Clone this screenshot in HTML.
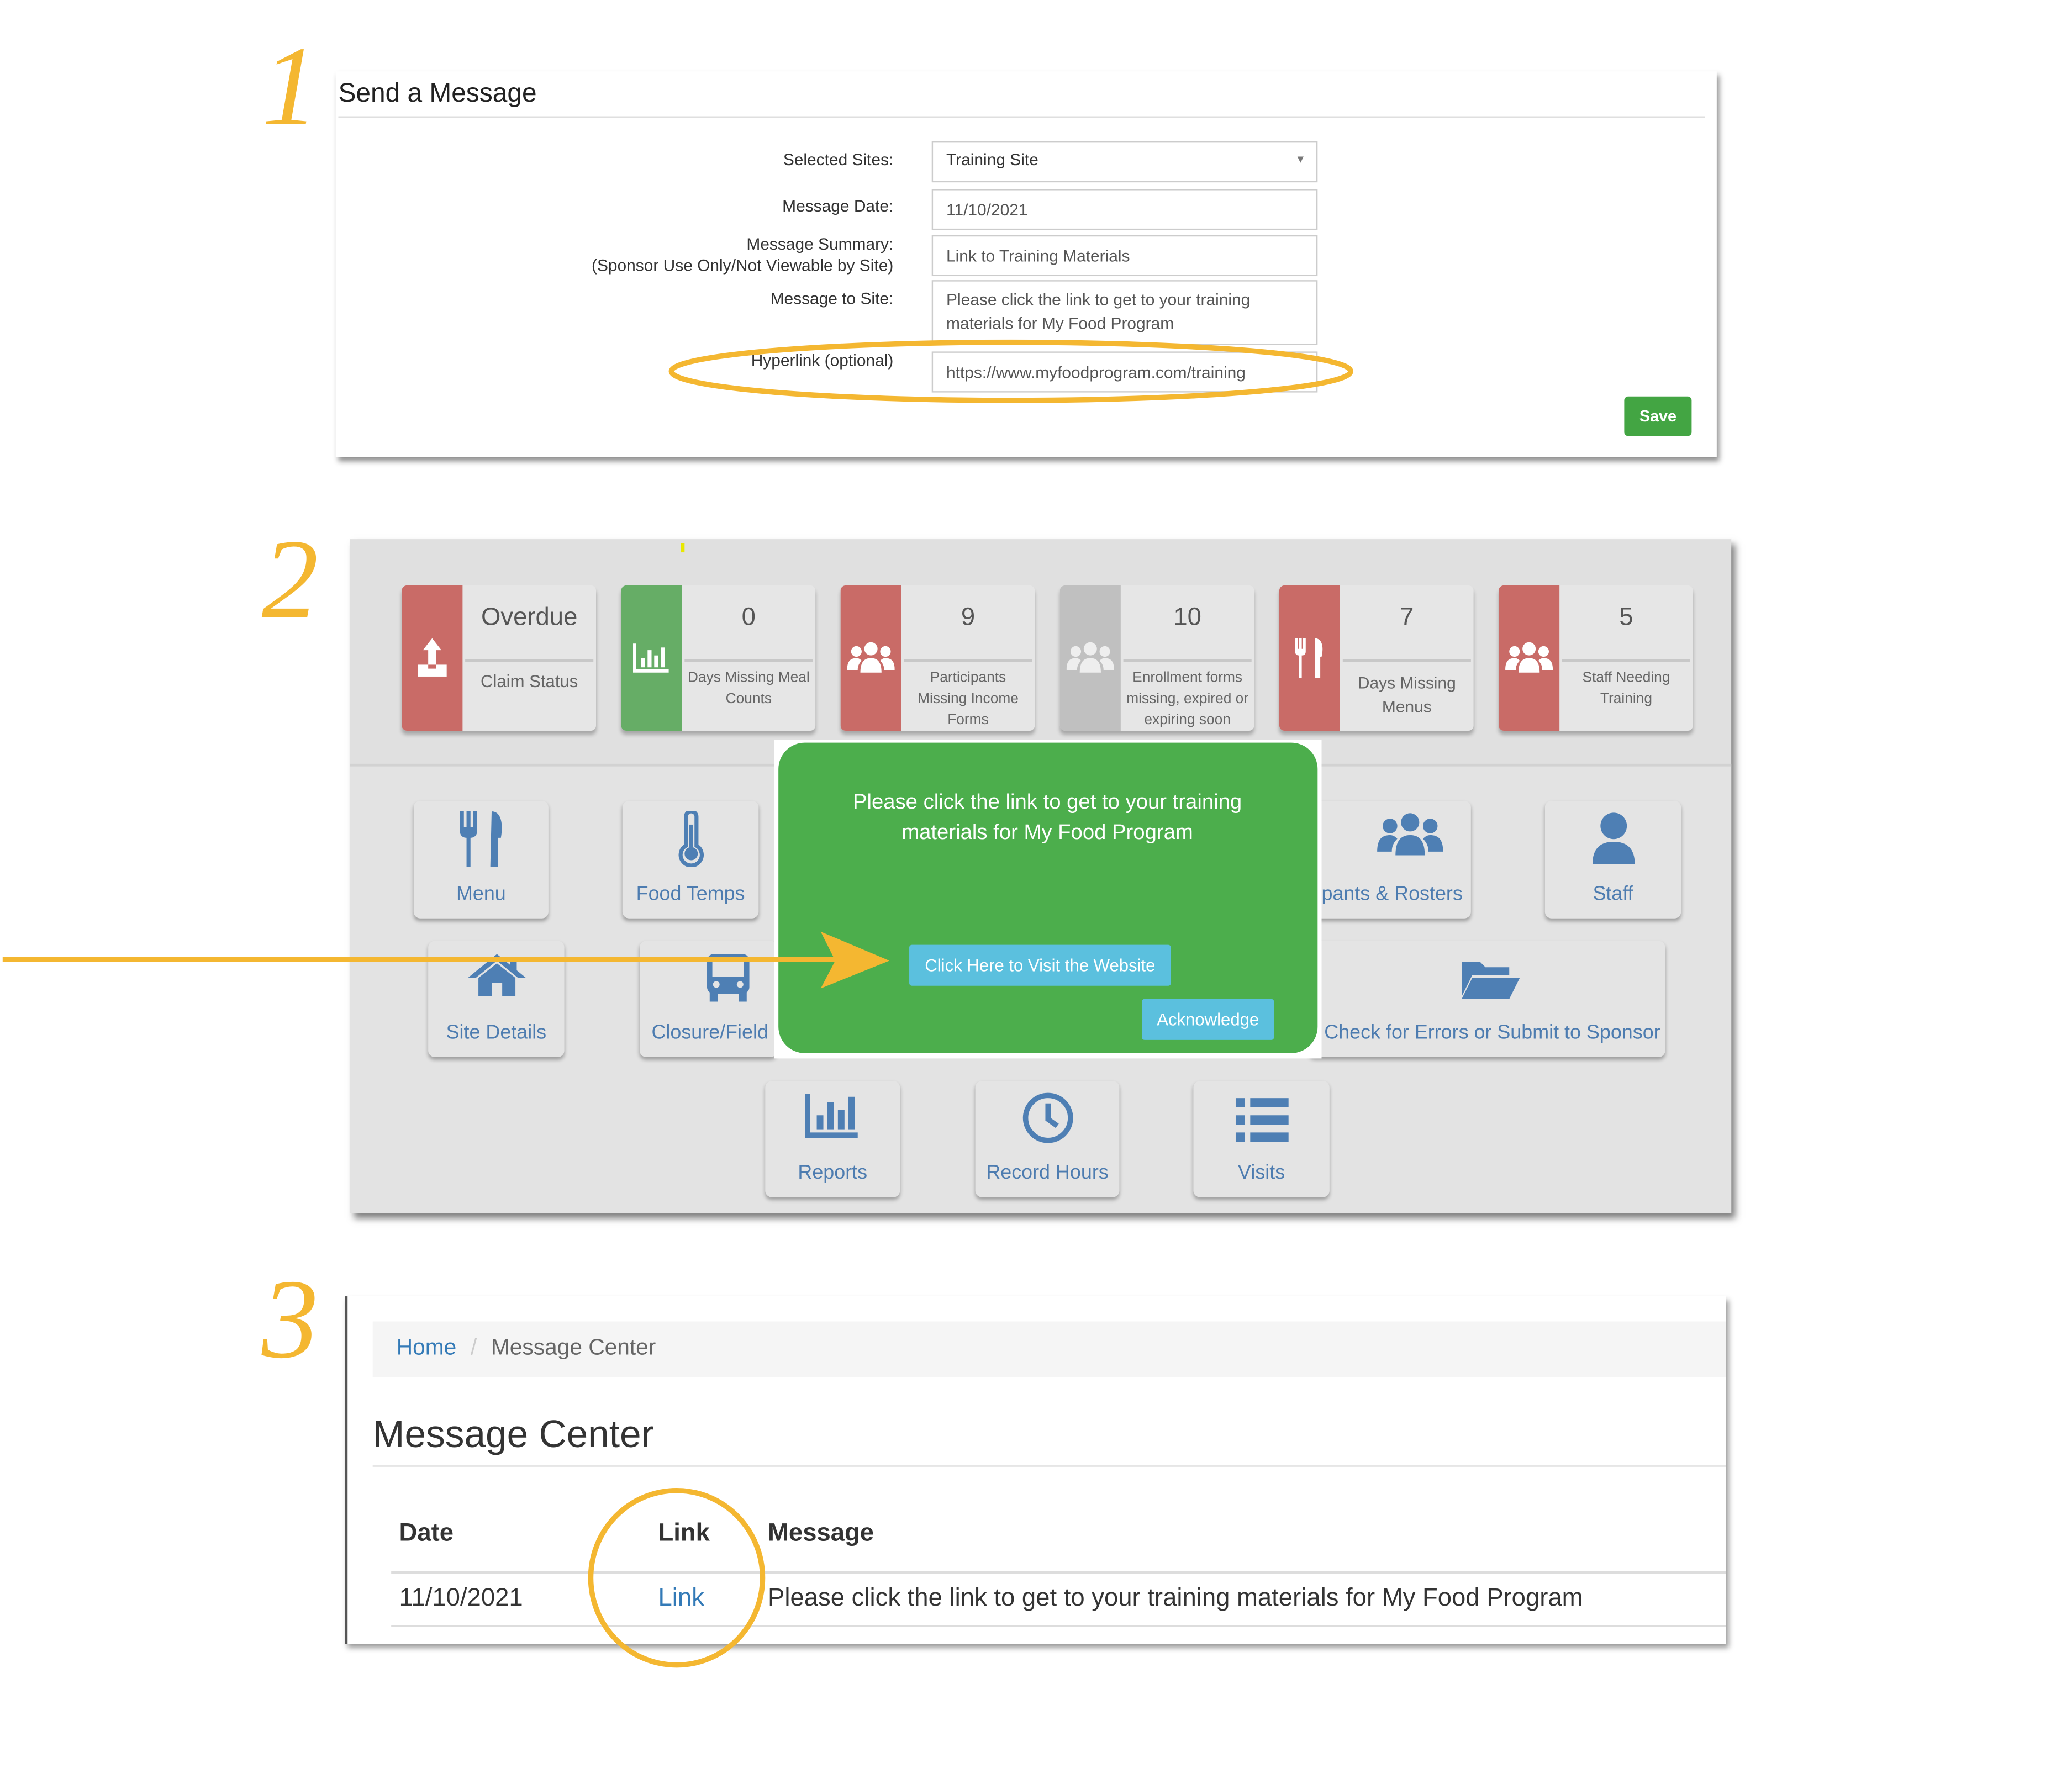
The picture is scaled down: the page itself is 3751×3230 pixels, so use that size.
<!DOCTYPE html>
<html><head><meta charset="utf-8">
<style>
*{box-sizing:border-box;margin:0;padding:0}
html,body{width:3751px;height:3230px;overflow:hidden;background:#fff}
#w{position:absolute;left:0;top:0;width:1568px;height:1350px;transform:scale(2.3925);transform-origin:0 0;font-family:"Liberation Sans",sans-serif;}
.a{position:absolute}
.num{position:absolute;font-family:"Liberation Serif",serif;font-style:italic;color:#f4b731;font-size:86px;line-height:1}
.lbl{position:absolute;right:892px;text-align:right;font-size:12.5px;color:#333;width:300px}
.inp{position:absolute;left:705px;width:292px;border:1px solid #ccc;background:#fff;font-size:12.5px;color:#555;padding:6px 10px;line-height:18px}
.card{position:absolute;top:443px;width:147px;height:110px;background:#e6e6e6;border-radius:4px;box-shadow:0 3px 3px rgba(0,0,0,.25);overflow:hidden}
.card .s{position:absolute;left:0;top:0;width:46px;height:110px}
.card .t{position:absolute;left:46px;right:0;top:14px;text-align:center;font-size:19px;color:#555}
.card .h{position:absolute;left:48px;right:2px;top:56px;border-top:2px solid #c8c8c8}
.card .b{position:absolute;left:46px;right:0;top:62px;text-align:center;font-size:11px;color:#666;line-height:16px}
.red{background:#c96b67}.grn{background:#66ad66}.gry{background:#c0c0c0}
.tile{position:absolute;background:#e4e4e4;border-radius:5px;box-shadow:0 2px 3px rgba(0,0,0,.3);text-align:center;color:#4d7cb0;font-size:15px}
.tile .l{position:absolute;left:0;right:0;bottom:10px;white-space:nowrap}
.tile svg{position:absolute;left:50%;transform:translateX(-50%);top:8px}
</style></head><body><div id="w">

<div class="num" style="left:198px;top:22px">1</div>
<div class="num" style="left:198px;top:395px">2</div>
<div class="num" style="left:198px;top:955px">3</div>

<div class="a" style="left:254px;top:54px;width:1045px;height:292px;background:#fff;box-shadow:2px 3px 4px rgba(0,0,0,.45)"></div>
<div class="a" style="left:256px;top:60px;font-size:20px;color:#222">Send a Message</div>
<div class="a" style="left:256px;top:88px;width:1034px;border-top:1px solid #ddd"></div>
<div class="lbl" style="top:114px">Selected Sites:</div>
<div class="lbl" style="top:149px">Message Date:</div>
<div class="lbl" style="top:177px;line-height:16px">Message Summary:<br>(Sponsor Use Only/Not Viewable by Site)</div>
<div class="lbl" style="top:219px">Message to Site:</div>
<div class="lbl" style="top:266px">Hyperlink (optional)</div>
<div class="inp" style="top:107px;height:31px;color:#333;padding-top:4px">Training Site<span style="position:absolute;right:8px;top:4px;font-size:8px;color:#777">▼</span></div>
<div class="inp" style="top:143px;height:31px">11/10/2021</div>
<div class="inp" style="top:178px;height:31px">Link to Training Materials</div>
<div class="inp" style="top:212px;height:49px;padding-top:5px">Please click the link to get to your training materials for My Food Program</div>
<div class="inp" style="top:266px;height:31px">https://www.myfoodprogram.com/training</div>
<div class="a" style="left:1229px;top:300px;width:51px;height:30px;background:#43a543;border-radius:3px;color:#fff;font-size:12px;font-weight:bold;text-align:center;line-height:30px">Save</div>
<svg class="a" style="left:0;top:0" width="1560" height="1344"><ellipse cx="765" cy="281" rx="257" ry="22" fill="none" stroke="#f4b731" stroke-width="4"/></svg>

<div class="a" style="left:265px;top:408px;width:1045px;height:510px;background:#e0e0e0;box-shadow:3px 4px 5px rgba(0,0,0,.5)"></div>
<div class="a" style="left:265px;top:578px;width:1045px;height:340px;background:#e3e3e3;border-top:2px solid #d2d2d2"></div>
<div class="a" style="left:515px;top:411px;width:3px;height:7px;background:#e8e800"></div>

<div class="card" style="left:304px"><div class="s red"></div><div class="t">Overdue</div><div class="h"></div><div class="b" style="top:65px;font-size:13px">Claim Status</div>
<svg class="a" style="left:10px;top:40px" width="26" height="30" viewBox="0 0 26 30"><path d="M13 0 L6 9 H10 V22 H16 V9 H20Z" fill="#fff"/><rect x="2" y="20" width="22" height="9" fill="#fff"/><rect x="10" y="20" width="6" height="3" fill="#c96b67"/></svg></div>
<div class="card" style="left:470px"><div class="s grn"></div><div class="t">0</div><div class="h"></div><div class="b">Days Missing Meal<br>Counts</div>
<svg class="a" style="left:9px;top:44px" width="28" height="22" viewBox="0 0 28 22"><path d="M1 0V21H27" stroke="#fff" stroke-width="3" fill="none"/><rect x="6" y="11" width="3" height="7" fill="#fff"/><rect x="11" y="5" width="3" height="13" fill="#fff"/><rect x="16" y="9" width="3" height="9" fill="#fff"/><rect x="21" y="3" width="3" height="15" fill="#fff"/></svg></div>
<div class="card" style="left:636px"><div class="s red"></div><div class="t">9</div><div class="h"></div><div class="b">Participants<br>Missing Income<br>Forms</div>
<svg class="a" style="left:5px;top:42px" width="36" height="26" viewBox="0 0 36 26"><g fill="#fff"><circle cx="18" cy="6" r="5"/><circle cx="7" cy="8" r="4"/><circle cx="29" cy="8" r="4"/><path d="M10 24c0-8 3-11 8-11s8 3 8 11z"/><path d="M0 22c0-6 2-9 7-9 2 0 3 1 4 2-2 2-3 4-3 7z"/><path d="M36 22c0-6-2-9-7-9-2 0-3 1-4 2 2 2 3 4 3 7z"/></g></svg></div>
<div class="card" style="left:802px"><div class="s gry"></div><div class="t">10</div><div class="h"></div><div class="b">Enrollment forms<br>missing, expired or<br>expiring soon</div>
<svg class="a" style="left:5px;top:42px" width="36" height="26" viewBox="0 0 36 26"><g fill="#eee"><circle cx="18" cy="6" r="5"/><circle cx="7" cy="8" r="4"/><circle cx="29" cy="8" r="4"/><path d="M10 24c0-8 3-11 8-11s8 3 8 11z"/><path d="M0 22c0-6 2-9 7-9 2 0 3 1 4 2-2 2-3 4-3 7z"/><path d="M36 22c0-6-2-9-7-9-2 0-3 1-4 2 2 2 3 4 3 7z"/></g></svg></div>
<div class="card" style="left:968px"><div class="s red"></div><div class="t">7</div><div class="h"></div><div class="b" style="top:65px;font-size:12.5px;line-height:18px">Days Missing<br>Menus</div>
<svg class="a" style="left:11px;top:40px" width="24" height="30" viewBox="0 0 24 30"><g fill="#fff"><path d="M1 0h2v8h1V0h2v8h1V0h2v10c0 2-1 3-3 3v17H4V13C2 13 1 12 1 10z"/><path d="M16 0c5 0 7 6 5 14h-1v16h-4z"/></g></svg></div>
<div class="card" style="left:1134px"><div class="s red"></div><div class="t">5</div><div class="h"></div><div class="b">Staff Needing<br>Training</div>
<svg class="a" style="left:5px;top:42px" width="36" height="26" viewBox="0 0 36 26"><g fill="#fff"><circle cx="18" cy="6" r="5"/><circle cx="7" cy="8" r="4"/><circle cx="29" cy="8" r="4"/><path d="M10 24c0-8 3-11 8-11s8 3 8 11z"/><path d="M0 22c0-6 2-9 7-9 2 0 3 1 4 2-2 2-3 4-3 7z"/><path d="M36 22c0-6-2-9-7-9-2 0-3 1-4 2 2 2 3 4 3 7z"/></g></svg></div>

<div class="tile" style="left:313px;top:606px;width:102px;height:89px"><svg width="36" height="42" viewBox="0 0 36 42"><g fill="#4e7fb4"><path d="M2 0h3v12h2V0h3v12h2V0h3v15c0 3-2 5-5 5v22H7V20c-3 0-5-2-5-5z"/><path d="M26 0c7 0 9 9 7 20h-2v22h-6z"/></g></svg><div class="l">Menu</div></div>
<div class="tile" style="left:471px;top:606px;width:103px;height:89px"><svg width="24" height="42" viewBox="0 0 24 42"><path d="M8 4a4 4 0 0 1 8 0v22a8 8 0 1 1-8 0z" fill="none" stroke="#4e7fb4" stroke-width="3"/><circle cx="12" cy="32" r="5" fill="#4e7fb4"/><rect x="10.5" y="10" width="3" height="20" fill="#4e7fb4"/></svg><div class="l">Food Temps</div></div>
<div class="tile" style="left:990px;top:606px;width:123px;height:89px"><svg width="52" height="36" viewBox="0 0 36 26" style="left:63%"><g fill="#4e7fb4"><circle cx="18" cy="6" r="5"/><circle cx="7" cy="8" r="4"/><circle cx="29" cy="8" r="4"/><path d="M10 24c0-8 3-11 8-11s8 3 8 11z"/><path d="M0 22c0-6 2-9 7-9 2 0 3 1 4 2-2 2-3 4-3 7z"/><path d="M36 22c0-6-2-9-7-9-2 0-3 1-4 2 2 2 3 4 3 7z"/></g></svg><div class="l" style="left:10px;text-align:left">pants &amp; Rosters</div></div>
<div class="tile" style="left:1169px;top:606px;width:103px;height:89px"><svg width="36" height="42" viewBox="0 0 36 42"><circle cx="18" cy="11" r="10" fill="#4e7fb4"/><path d="M2 40c0-12 6-17 16-17s16 5 16 17z" fill="#4e7fb4"/></svg><div class="l">Staff</div></div>

<div class="tile" style="left:324px;top:712px;width:103px;height:88px"><svg width="48" height="36" viewBox="0 0 48 36"><path d="M24 2 L2 20 H8 L24 7 L40 20 H46Z" fill="#4e7fb4"/><path d="M10 20 L24 9 L38 20 V34 H28 V24 H20 V34 H10Z" fill="#4e7fb4"/><rect x="34" y="4" width="5" height="10" fill="#4e7fb4"/></svg><div class="l">Site Details</div></div>
<div class="tile" style="left:484px;top:712px;width:104px;height:88px"><svg width="40" height="40" viewBox="0 0 40 40" style="left:64%"><rect x="4" y="2" width="32" height="30" rx="5" fill="#4e7fb4"/><rect x="8" y="8" width="24" height="11" fill="#e4e4e4"/><circle cx="11" cy="25" r="2.5" fill="#e4e4e4"/><circle cx="29" cy="25" r="2.5" fill="#e4e4e4"/><rect x="6" y="31" width="6" height="7" fill="#4e7fb4"/><rect x="28" y="31" width="6" height="7" fill="#4e7fb4"/></svg><div class="l" style="left:9px;text-align:left">Closure/Field</div></div>
<div class="tile" style="left:990px;top:712px;width:270px;height:88px"><svg width="48" height="34" viewBox="0 0 48 34" style="left:51%;top:12px"><path d="M2 4h14l4 4h18v6H10L2 30z" fill="#4e7fb4"/><path d="M10 16h36L38 32H2z" fill="#4e7fb4"/></svg><div class="l" style="left:12px;text-align:left">Check for Errors or Submit to Sponsor</div></div>

<div class="tile" style="left:579px;top:818px;width:102px;height:88px"><svg width="42" height="36" viewBox="0 0 42 36"><path d="M2 2V33H40" stroke="#4e7fb4" stroke-width="4" fill="none"/><rect x="9" y="18" width="5" height="11" fill="#4e7fb4"/><rect x="17" y="8" width="5" height="21" fill="#4e7fb4"/><rect x="25" y="14" width="5" height="15" fill="#4e7fb4"/><rect x="33" y="4" width="5" height="25" fill="#4e7fb4"/></svg><div class="l">Reports</div></div>
<div class="tile" style="left:738px;top:818px;width:109px;height:88px"><svg width="40" height="40" viewBox="0 0 40 40"><circle cx="20" cy="20" r="17" fill="none" stroke="#4e7fb4" stroke-width="4"/><path d="M20 9V21L27 26" stroke="#4e7fb4" stroke-width="4" fill="none"/></svg><div class="l">Record Hours</div></div>
<div class="tile" style="left:903px;top:818px;width:103px;height:88px"><svg width="42" height="36" viewBox="0 0 42 36" style="top:12px"><g fill="#4e7fb4"><rect x="1" y="1" width="7" height="7"/><rect x="1" y="14" width="7" height="7"/><rect x="1" y="27" width="7" height="7"/><rect x="12" y="1" width="29" height="7"/><rect x="12" y="14" width="29" height="7"/><rect x="12" y="27" width="29" height="7"/></g></svg><div class="l">Visits</div></div>

<div class="a" style="left:586px;top:560px;width:414px;height:241px;background:#fff"></div>
<div class="a" style="left:589px;top:562px;width:408px;height:235px;background:#4cae4c;border-radius:20px"></div>
<div class="a" style="left:600px;top:596px;width:385px;text-align:center;color:#fff;font-size:16px;line-height:23px">Please click the link to get to your training<br>materials for My Food Program</div>
<div class="a" style="left:688px;top:715px;width:198px;height:31px;background:#5bc0de;border-radius:2px;color:#fff;font-size:13px;text-align:center;line-height:31px">Click Here to Visit the Website</div>
<div class="a" style="left:864px;top:756px;width:100px;height:31px;background:#5bc0de;border-radius:2px;color:#fff;font-size:13px;text-align:center;line-height:31px">Acknowledge</div>
<svg class="a" style="left:0;top:0" width="1560" height="1344"><path d="M2 726H635" stroke="#f4b731" stroke-width="4"/><path d="M621 705 L673 727 L621 748 L632 727Z" fill="#f4b731"/></svg>

<div class="a" style="left:261px;top:981px;width:1045px;height:263px;background:#fff;border-left:2px solid #555;box-shadow:2px 3px 4px rgba(0,0,0,.4)"></div>
<div class="a" style="left:282px;top:1000px;width:1024px;height:42px;background:#f5f5f5"></div>
<div class="a" style="left:300px;top:1010px;font-size:17px;color:#337ab7">Home <span style="color:#ccc;padding:0 6px">/</span> <span style="color:#666">Message Center</span></div>
<div class="a" style="left:282px;top:1070px;font-size:29px;color:#333">Message Center</div>
<div class="a" style="left:282px;top:1109px;width:1024px;border-top:1px solid #ddd"></div>
<div class="a" style="left:302px;top:1150px;font-size:19px;font-weight:bold;color:#333">Date</div>
<div class="a" style="left:498px;top:1150px;font-size:19px;font-weight:bold;color:#333">Link</div>
<div class="a" style="left:581px;top:1150px;font-size:19px;font-weight:bold;color:#333">Message</div>
<div class="a" style="left:296px;top:1189px;width:1010px;border-top:2px solid #ddd"></div>
<div class="a" style="left:302px;top:1199px;font-size:19px;color:#333">11/10/2021</div>
<div class="a" style="left:498px;top:1199px;font-size:19px;color:#337ab7">Link</div>
<div class="a" style="left:581px;top:1199px;font-size:19px;color:#333">Please click the link to get to your training materials for My Food Program</div>
<div class="a" style="left:296px;top:1230px;width:1010px;border-top:1px solid #ddd"></div>
<svg class="a" style="left:0;top:0" width="1560" height="1344"><ellipse cx="512" cy="1194" rx="65" ry="66" fill="none" stroke="#f4b731" stroke-width="4"/></svg>

</div></body></html>
